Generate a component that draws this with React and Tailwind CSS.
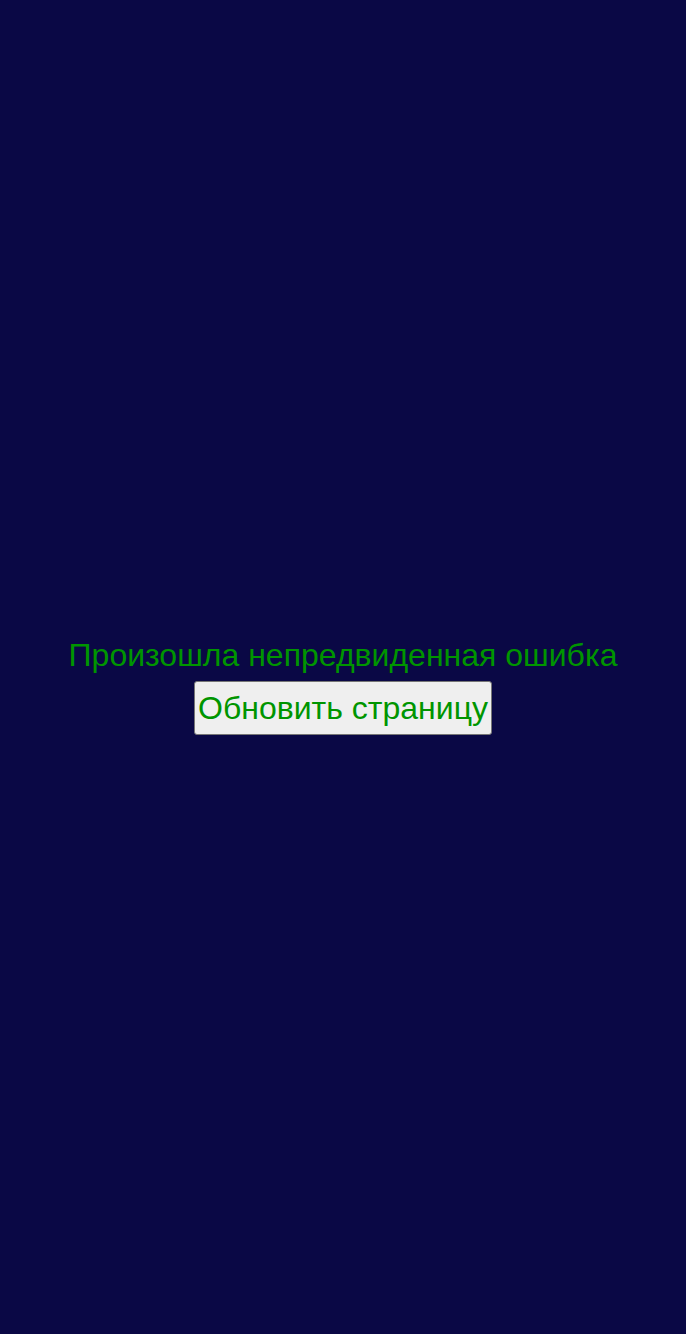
export default function App() {
  return (
    <div className="min-h-screen w-full bg-[#0a0845] flex flex-col items-center justify-center" style={{ fontFamily: '"Liberation Sans", Arial, sans-serif' }}>
      <div className="flex flex-col items-center gap-[7px] pt-[38px]">
        <p className="text-[32px] leading-[37px] text-[#009500]">Произошла непредвиденная ошибка</p>
        <button className="text-[32px] leading-[36px] text-[#009500] bg-[#efefef] border border-[#767676] rounded-[3px] px-[3px] py-[8px]">Обновить страницу</button>
      </div>
    </div>
  );
}
